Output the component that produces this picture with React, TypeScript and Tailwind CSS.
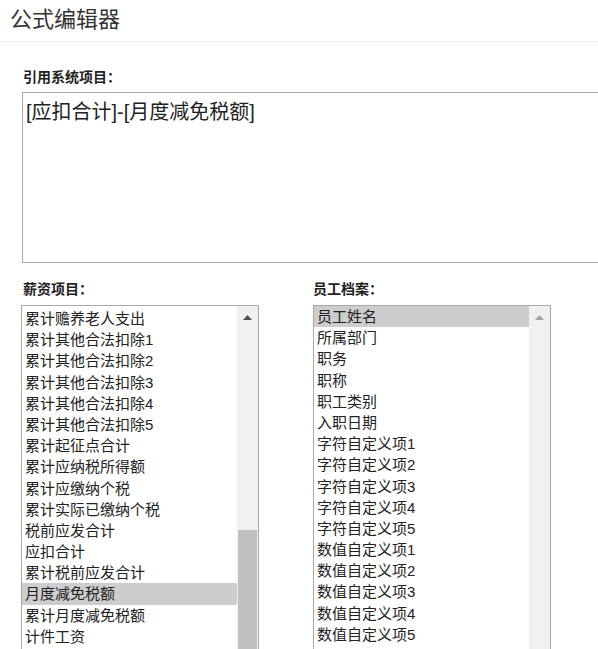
import React from "react";

const leftItems = [
  "累计赡养老人支出",
  "累计其他合法扣除1",
  "累计其他合法扣除2",
  "累计其他合法扣除3",
  "累计其他合法扣除4",
  "累计其他合法扣除5",
  "累计起征点合计",
  "累计应纳税所得额",
  "累计应缴纳个税",
  "累计实际已缴纳个税",
  "税前应发合计",
  "应扣合计",
  "累计税前应发合计",
  "月度减免税额",
  "累计月度减免税额",
  "计件工资",
];

const rightItems = [
  "员工姓名",
  "所属部门",
  "职务",
  "职称",
  "职工类别",
  "入职日期",
  "字符自定义项1",
  "字符自定义项2",
  "字符自定义项3",
  "字符自定义项4",
  "字符自定义项5",
  "数值自定义项1",
  "数值自定义项2",
  "数值自定义项3",
  "数值自定义项4",
  "数值自定义项5",
];

function UpArrow({ color }: { color: string }) {
  return (
    <svg width="9" height="5" viewBox="0 0 9 5" className="block">
      <polygon points="0,5 9,5 4.5,0" fill={color} />
    </svg>
  );
}

function ListBox({
  items,
  selected,
  padTop,
  arrowColor,
  thumb,
}: {
  items: string[];
  selected: number;
  padTop: string;
  arrowColor: string;
  thumb: boolean;
}) {
  return (
    <div className="flex h-[360px] w-[238px] border border-[#a9a9a9] bg-white">
      <div className={`flex-1 overflow-hidden ${padTop}`}>
        {items.map((t, i) => (
          <div
            key={t}
            className={`h-[21.2px] whitespace-nowrap pl-[3px] text-[15px] leading-[21.2px] text-[#222] ${
              i === selected ? "bg-[#cdcdcd]" : ""
            }`}
          >
            {t}
          </div>
        ))}
      </div>
      <div className="flex w-[21px] flex-col bg-[#f0f0f0]">
        <div className="flex h-[21px] items-center justify-center pt-[1px]">
          <UpArrow color={arrowColor} />
        </div>
        {thumb ? (
          <>
            <div className="h-[203px]" />
            <div className="ml-[1px] w-[19px] flex-1 bg-[#c1c1c1]" />
          </>
        ) : null}
      </div>
    </div>
  );
}

export default function App() {
  return (
    <div
      className="h-[649px] w-[598px] overflow-hidden bg-white text-[#222]"
      style={{ fontFamily: '"Liberation Sans", "Noto Sans CJK SC", sans-serif' }}
    >
      <div className="flex h-[42px] items-center border-b border-[#eeeeee] pl-[10px] text-[22px] leading-none text-[#333]">
        <span className="-mt-[2px]">公式编辑器</span>
      </div>
      <div className="pl-[22px]">
        <div className="mt-[26px] h-[18px] pl-[1px] text-[14px] font-bold leading-[18px] text-[#222]">
          引用系统项目：
        </div>
        <div className="mt-[6px] h-[171px] w-[620px] border border-[#a9a9a9] pl-[3px] pt-[6px] text-[20px] leading-[26px] text-[#222]">
          [应扣合计]-[月度减免税额]
        </div>
        <div className="mt-[17px] flex">
          <div className="-ml-[1px] flex w-[238px] flex-col">
            <div className="h-[18px] pl-[2px] text-[14px] font-bold leading-[18px]">薪资项目：</div>
            <div className="mt-[7px]">
              <ListBox items={leftItems} selected={13} padTop="pt-[2px]" arrowColor="#505050" thumb />
            </div>
          </div>
          <div className="ml-[54px] flex w-[238px] flex-col">
            <div className="h-[18px] text-[14px] font-bold leading-[18px]">员工档案：</div>
            <div className="mt-[7px]">
              <ListBox items={rightItems} selected={0} padTop="pt-[0px]" arrowColor="#a3a3a3" thumb={false} />
            </div>
          </div>
        </div>
      </div>
    </div>
  );
}
